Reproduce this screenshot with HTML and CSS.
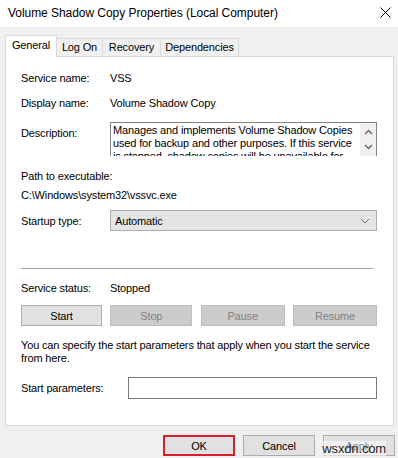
FILE: index.html
```html
<!DOCTYPE html>
<html lang="en">
<head>
    <meta charset="utf-8">
    <title>Volume Shadow Copy Properties (Local Computer)</title>
    <link rel="stylesheet" href="styles.css">
</head>
<body>
    <div class="titlebar">
        <span class="title">Volume Shadow Copy Properties (Local Computer)</span>
        <svg class="close" width="11" height="11" viewBox="0 0 11 11">
            <path d="M0.5 0.5 L10.5 10.5 M10.5 0.5 L0.5 10.5" stroke="#000" stroke-width="1" fill="none"/>
        </svg>
    </div>

    <div class="dialog">
        <div class="tabs">
            <div class="tab selected tab-general">General</div>
            <div class="tab tab-logon">Log On</div>
            <div class="tab tab-recovery">Recovery</div>
            <div class="tab tab-deps">Dependencies</div>
        </div>

        <div class="panel">
            <div class="row r-name">
                <span class="label">Service name:</span>
                <span class="value">VSS</span>
            </div>
            <div class="row r-display">
                <span class="label">Display name:</span>
                <span class="value">Volume Shadow Copy</span>
            </div>
            <div class="row r-desc">
                <span class="label desc-label">Description:</span>
                <div class="textbox">
                    <div class="textbox-text">Manages and implements Volume Shadow Copies used for backup and other purposes. If this service is stopped, shadow copies will be unavailable for backup and the backup may fail.</div>
                    <div class="scroll">
                        <svg width="9" height="6" viewBox="0 0 9 6"><path d="M1 5 L4.5 1.5 L8 5" stroke="#606060" stroke-width="1.3" fill="none"/></svg>
                        <svg width="9" height="6" viewBox="0 0 9 6"><path d="M1 1 L4.5 4.5 L8 1" stroke="#606060" stroke-width="1.3" fill="none"/></svg>
                    </div>
                </div>
            </div>
            <div class="row r-path">Path to executable:</div>
            <div class="row r-pathval">C:\Windows\system32\vssvc.exe</div>
            <div class="row r-startup">
                <span class="label">Startup type:</span>
                <div class="select">
                    <span>Automatic</span>
                    <svg width="10" height="6" viewBox="0 0 10 6"><path d="M1 1 L5 5 L9 1" stroke="#707070" stroke-width="1" fill="none"/></svg>
                </div>
            </div>
            <div class="separator"></div>
            <div class="row r-status">
                <span class="label">Service status:</span>
                <span class="value">Stopped</span>
            </div>
            <div class="actions">
                <button class="btn btn-start">Start</button>
                <button class="btn btn-stop" disabled>Stop</button>
                <button class="btn btn-pause" disabled>Pause</button>
                <button class="btn btn-resume" disabled>Resume</button>
            </div>
            <p class="hint">You can specify the start parameters that apply when you start the service from here.</p>
            <div class="row r-params">
                <span class="label params-label">Start parameters:</span>
                <div class="input"></div>
            </div>
        </div>

        <div class="footer">
            <button class="btn fbtn ok">OK</button>
            <button class="btn fbtn">Cancel</button>
            <button class="btn fbtn">Apply</button>
            <span class="watermark">wsxdn.com</span>
        </div>
    </div>
</body>
</html>
```

FILE: styles.css
```css
body {
    margin: 0;
    width: 398px;
    height: 458px;
    overflow: hidden;
    font-family: "Liberation Sans", Arial, sans-serif;
    font-size: 11px;
    letter-spacing: -0.15px;
    color: #000;
    background: #f0f0f0;
}

.titlebar {
    height: 27px;
    background: #fff;
    display: flex;
    align-items: center;
    justify-content: space-between;
    padding: 0 7px 2px 8px;
    box-sizing: border-box;
}

.title {
    font-size: 12px;
    letter-spacing: -0.05px;
}

.dialog {
    position: relative;
    height: 431px;
}

.tabs {
    display: flex;
    align-items: flex-end;
    margin-left: 5px;
    padding-top: 7px;
    height: 22px;
}

.tab {
    height: 18px;
    line-height: 17px;
    border: 1px solid #d9d9d9;
    border-bottom: none;
    border-left: none;
    background: #f0f0f0;
    box-sizing: border-box;
    text-align: center;
}

.tab.selected {
    height: 22px;
    line-height: 18px;
    background: #fff;
    border-left: 1px solid #d9d9d9;
    margin-bottom: -1px;
    position: relative;
    z-index: 1;
}

.tab-general { width: 52px; }
.tab-logon { width: 46px; }
.tab-recovery { width: 58px; }
.tab-deps { width: 78px; }

.panel {
    margin-left: 5px;
    width: 389px;
    height: 370px;
    box-sizing: border-box;
    background: #fff;
    border: 1px solid #d9d9d9;
    padding: 13px 16px 0 15px;
}

.row {
    display: flex;
    align-items: center;
    height: 16px;
}

.label {
    width: 89px;
    flex-shrink: 0;
}

.r-display { margin-top: 9px; }

.r-desc {
    margin-top: 11px;
    height: 34px;
    align-items: flex-start;
}

.desc-label {
    padding-top: 5px;
}

.textbox {
    flex: 1;
    height: 34px;
    box-sizing: border-box;
    border: 1px solid #828282;
    border-bottom: none;
    display: flex;
    overflow: hidden;
}

.textbox-text {
    flex: 1;
    padding: 1px 0 0 2px;
    line-height: 13px;
}

.scroll {
    width: 16px;
    flex-shrink: 0;
    background: #f0f0f0;
    display: flex;
    flex-direction: column;
    align-items: center;
    justify-content: space-between;
    padding: 6px 0 6px;
    box-sizing: border-box;
}

.r-path { margin-top: 12px; }
.r-pathval { margin-top: 3px; }

.r-startup {
    margin-top: 7px;
    height: 21px;
}

.select {
    flex: 1;
    height: 21px;
    box-sizing: border-box;
    background: #e5e5e5;
    border: 1px solid #adadad;
    display: flex;
    align-items: center;
    justify-content: space-between;
    padding: 0 6px 0 4px;
}

.separator {
    margin-top: 37px;
    width: 352px;
    height: 1px;
    background: #a0a0a0;
}

.r-status { margin-top: 11px; }

.actions {
    margin-top: 9px;
    display: flex;
    justify-content: space-between;
}

.btn {
    font-family: "Liberation Sans", Arial, sans-serif;
    font-size: 11px;
    letter-spacing: -0.15px;
    height: 21px;
    padding: 0;
    margin: 0;
    box-sizing: border-box;
    background: #e1e1e1;
    border: 1px solid #adadad;
    color: #000;
}

.btn:disabled {
    background: #cccccc;
    border-color: #bfbfbf;
    color: #838383;
}

.btn-start { width: 81px; }
.btn-stop { width: 82px; }
.btn-pause { width: 84px; }
.btn-resume { width: 84px; }

.hint {
    margin: 13px 0 0;
    line-height: 13px;
    width: 358px;
}

.r-params {
    margin-top: 12px;
    height: 22px;
}

.params-label {
    width: 107px;
}

.input {
    flex: 1;
    height: 22px;
    box-sizing: border-box;
    border: 1px solid #7a7a7a;
}

.footer {
    display: flex;
    justify-content: flex-end;
    gap: 8px;
    margin-top: 9px;
    padding-right: 3px;
}

.fbtn {
    width: 72px;
}

.ok {
    border: 2px solid #d9202b;
}

.watermark {
    position: absolute;
    right: 12px;
    bottom: 2px;
    font-size: 13px;
    color: #222;
    background: rgba(255, 255, 255, 0.55);
}
```
